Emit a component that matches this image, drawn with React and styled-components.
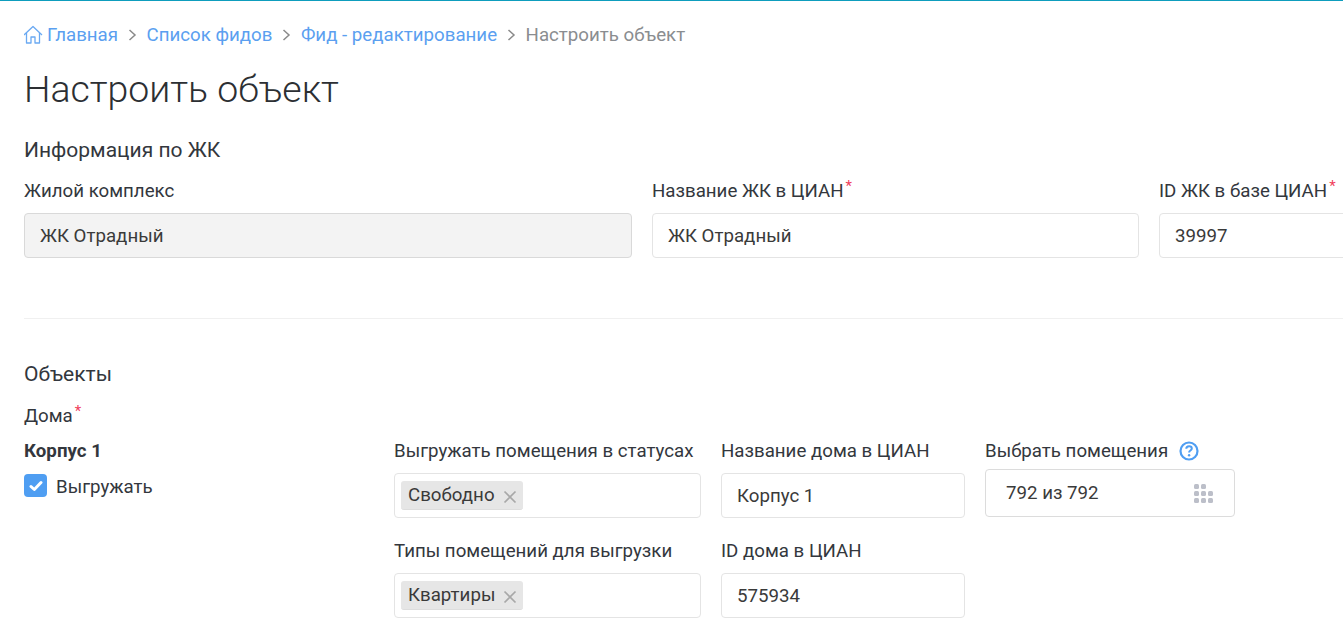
import styled, { createGlobalStyle } from 'styled-components';

const GlobalStyle = createGlobalStyle`
	html, body {
		margin: 0;
		padding: 0;
		background: #fff;
		overflow: hidden;
	}
	body {
		font-family: Roboto, "Liberation Sans", sans-serif;
		color: #33373d;
	}
`;

const Page = styled.div`
	width: 1343px;
	height: 630px;
	box-sizing: border-box;
	border-top: 1px solid #0e9dbd;
	padding: 0 0 0 24px;
	overflow: hidden;
`;

const Breadcrumbs = styled.nav`
	display: flex;
	align-items: center;
	height: 20px;
	margin-top: 24px;
	font-size: 18.7px;
	line-height: 20px;
`;

const Crumb = styled.a`
	display: flex;
	align-items: center;
	gap: 3px;
	color: ${({ $current }) => ($current ? '#8a8d90' : '#5b9ff0')};
`;

const Separator = styled.span`
	display: flex;
	width: 28.5px;
	justify-content: center;
	color: #8a8a8a;
`;

const Title = styled.h1`
	margin: 22px 0 0;
	font-size: 37.4px;
	line-height: 44px;
	font-weight: 300;
	color: #2c2f33;
`;

const SectionTitle = styled.h2`
	margin: ${({ $top }) => $top}px 0 0;
	font-size: 21px;
	line-height: 24px;
	font-weight: 400;
	color: #33373d;
`;

const Row = styled.div`
	display: grid;
	grid-template-columns: 608px 487px 300px;
	gap: 20px;
	margin-top: 16px;
`;

const Label = styled.div`
	padding-top: 1px;
	font-size: 18.7px;
	line-height: 24px;
	color: #33373d;
	white-space: nowrap;
`;

const Star = styled.sup`
	color: #f0405c;
	font-size: 15px;
	line-height: 0;
	margin-left: 2px;
	vertical-align: 6px;
`;

const Input = styled.div`
	box-sizing: border-box;
	height: 45px;
	margin-top: 10px;
	padding: 0 15px;
	display: flex;
	align-items: center;
	border: 1px solid ${({ $disabled }) => ($disabled ? '#d9d9d9' : '#e4e4e4')};
	border-radius: 4px;
	background: ${({ $disabled }) => ($disabled ? '#f3f3f3' : '#fff')};
	font-size: 18.7px;
	color: #3a3a3a;
`;

const Divider = styled.hr`
	margin: 60px 0 0;
	border: 0;
	border-top: 1px solid #f0f0f0;
`;

const HousesLabel = styled(Label)`
	margin-top: 17px;
`;

const House = styled.div`
	display: grid;
	grid-template-columns: 350px 307px 244px 250px;
	column-gap: 20px;
	margin-top: 10px;
`;

const HouseName = styled.div`
	padding-top: 1px;
	font-size: 18.7px;
	line-height: 24px;
	font-weight: 700;
	color: #33373d;
`;

const CheckRow = styled.label`
	display: flex;
	align-items: flex-start;
	gap: 9px;
	margin-top: 11px;
	font-size: 18.7px;
	line-height: 24px;
	color: #33373d;
`;

const CheckBox = styled.span`
	display: flex;
	align-items: center;
	justify-content: center;
	width: 23px;
	height: 23px;
	border-radius: 4px;
	background: #4f9ef2;
`;

const CheckText = styled.span`
	padding-top: 1px;
`;

const Field = styled.div`
	margin-bottom: 20px;
`;

const TagInput = styled(Input)`
	padding: 0 6px;
`;

const Tag = styled.span`
	display: flex;
	align-items: center;
	box-sizing: border-box;
	height: 29px;
	padding: 0 6px 0 7px;
	gap: 8px;
	border-radius: 3px;
	border-bottom: 1px solid #ddd;
	background: #e6e6e6;
	font-size: 18.7px;
	color: #3a3a3a;

	svg {
		margin-top: 3px;
	}
`;

const LabelWithHint = styled(Label)`
	display: flex;
	align-items: center;
	gap: 11px;
`;

const PickerInput = styled(Input)`
	height: 48px;
	margin-top: 6px;
	padding: 0 19px 0 20px;
	justify-content: space-between;
	border-color: #dcdcdc;
`;

const Home = () => (
	<svg width="20" height="20" viewBox="1 0 20 20" fill="none" stroke="#6aa9f2" strokeWidth="1.3" strokeLinejoin="round">
		<path d="M1 10 10 1.500 19 10" />
		<path d="M3.500 8v10h4.500v-6h4v6h4.500V8" />
	</svg>
);

const Chevron = () => (
	<svg width="9" height="14" viewBox="0 0 9 14" fill="none" stroke="#8a8a8a" strokeWidth="1.5">
		<path d="M1.500 2 7 7l-5.500 5" />
	</svg>
);

const Check = () => (
	<svg width="14" height="12" viewBox="0 0 14 12" fill="none" stroke="#fff" strokeWidth="3" strokeLinecap="round" strokeLinejoin="round">
		<path d="M2 6.500 5.300 9.500 12 2.500" />
	</svg>
);

const Cross = () => (
	<svg width="14" height="14" viewBox="0 0 14 14" stroke="#a8a8a8" strokeWidth="1.7">
		<path d="M1.500 1.500l11 11M12.500 1.500l-11 11" />
	</svg>
);

const Hint = () => (
	<svg width="20" height="20" viewBox="0 0 20 20" fill="none">
		<circle cx="10" cy="10" r="8.500" stroke="#4f9ef2" strokeWidth="2.200" />
		<path d="M7.300 7.800c0-1.700 1.200-2.600 2.800-2.600s2.700.9 2.700 2.300c0 2-2.700 2-2.700 3.900" stroke="#4f9ef2" strokeWidth="2" />
		<circle cx="10.100" cy="14.300" r="1.200" fill="#4f9ef2" />
	</svg>
);

const Dots = () => (
	<svg width="22" height="20" viewBox="0 0 22 20" fill="#bcbfc9">
		{[[1, 1], [8, 1], [1, 8], [8, 8], [15, 8], [1, 15], [8, 15], [15, 15]].map(([x, y]) => (
			<rect key={`${x}-${y}`} x={x} y={y} width="5" height="5" rx="1.500" />
		))}
	</svg>
);

export default function App() {
	return (
		<Page>
			<GlobalStyle />
			<Breadcrumbs>
				<Crumb>
					<Home />
					Главная
				</Crumb>
				<Separator><Chevron /></Separator>
				<Crumb>Список фидов</Crumb>
				<Separator><Chevron /></Separator>
				<Crumb>Фид - редактирование</Crumb>
				<Separator><Chevron /></Separator>
				<Crumb $current>Настроить объект</Crumb>
			</Breadcrumbs>
			<Title>Настроить объект</Title>
			<SectionTitle $top={27}>Информация по ЖК</SectionTitle>
			<Row>
				<div>
					<Label>Жилой комплекс</Label>
					<Input $disabled>ЖК Отрадный</Input>
				</div>
				<div>
					<Label>Название ЖК в ЦИАН<Star>*</Star></Label>
					<Input>ЖК Отрадный</Input>
				</div>
				<div>
					<Label>ID ЖК в базе ЦИАН<Star>*</Star></Label>
					<Input>39997</Input>
				</div>
			</Row>
			<Divider />
			<SectionTitle $top={43}>Объекты</SectionTitle>
			<HousesLabel>Дома<Star>*</Star></HousesLabel>
			<House>
				<div>
					<HouseName>Корпус 1</HouseName>
					<CheckRow>
						<CheckBox><Check /></CheckBox>
						<CheckText>Выгружать</CheckText>
					</CheckRow>
				</div>
				<div>
					<Field>
						<Label>Выгружать помещения в статусах</Label>
						<TagInput>
							<Tag>Свободно <Cross /></Tag>
						</TagInput>
					</Field>
					<Field>
						<Label>Типы помещений для выгрузки</Label>
						<TagInput>
							<Tag>Квартиры <Cross /></Tag>
						</TagInput>
					</Field>
				</div>
				<div>
					<Field>
						<Label>Название дома в ЦИАН</Label>
						<Input>Корпус 1</Input>
					</Field>
					<Field>
						<Label>ID дома в ЦИАН</Label>
						<Input>575934</Input>
					</Field>
				</div>
				<div>
					<LabelWithHint>Выбрать помещения <Hint /></LabelWithHint>
					<PickerInput>792 из 792 <Dots /></PickerInput>
				</div>
			</House>
		</Page>
	);
}
